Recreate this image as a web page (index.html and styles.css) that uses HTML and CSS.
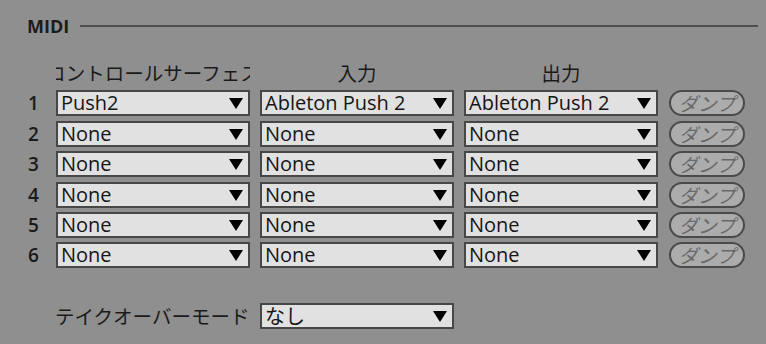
FILE: index.html
```html
<!DOCTYPE html>
<html lang="ja">
<head>
    <meta charset="UTF-8">
    <title>MIDI</title>
    <link rel="stylesheet" href="styles.css">
</head>
<body>
    <div class="section-title">
        <span>MIDI</span>
        <div class="rule"></div>
    </div>

    <div class="midi-grid">
        <div></div>
        <div class="col-head clip"><span>コントロールサーフェス</span></div>
        <div class="col-head">入力</div>
        <div class="col-head">出力</div>
        <div></div>

        <div class="num">1</div>
        <div class="dropdown">Push2</div>
        <div class="dropdown">Ableton Push 2</div>
        <div class="dropdown">Ableton Push 2</div>
        <div class="dump">ダンプ</div>

        <div class="num">2</div>
        <div class="dropdown">None</div>
        <div class="dropdown">None</div>
        <div class="dropdown">None</div>
        <div class="dump">ダンプ</div>

        <div class="num">3</div>
        <div class="dropdown">None</div>
        <div class="dropdown">None</div>
        <div class="dropdown">None</div>
        <div class="dump">ダンプ</div>

        <div class="num">4</div>
        <div class="dropdown">None</div>
        <div class="dropdown">None</div>
        <div class="dropdown">None</div>
        <div class="dump">ダンプ</div>

        <div class="num">5</div>
        <div class="dropdown">None</div>
        <div class="dropdown">None</div>
        <div class="dropdown">None</div>
        <div class="dump">ダンプ</div>

        <div class="num">6</div>
        <div class="dropdown">None</div>
        <div class="dropdown">None</div>
        <div class="dropdown">None</div>
        <div class="dump">ダンプ</div>
    </div>

    <div class="takeover">
        <div class="takeover-label">テイクオーバーモード</div>
        <div class="dropdown">なし</div>
    </div>
</body>
</html>
```

FILE: styles.css
```css
body {
    margin: 0;
    background-color: #8f8f8f;
    color: #151515;
    font-family: "Open Sans", "Noto Sans CJK JP", sans-serif;
    font-size: 20px;
}

.section-title {
    display: flex;
    align-items: center;
    padding: 15px 8px 0 27px;
    height: 22px;
}
.section-title span {
    font-weight: bold;
    font-size: 18px;
    color: #1c1c1c;
}
.rule {
    flex: 1;
    height: 2px;
    background-color: #4e4e4e;
    margin-left: 11px;
}

.midi-grid {
    display: grid;
    grid-template-columns: 46px 194px 194px 194px 77px;
    grid-auto-rows: 26px;
    column-gap: 10px;
    row-gap: 4.4px;
    margin-top: 23px;
}

.col-head {
    font-family: "Noto Sans CJK JP", sans-serif;
    font-size: 19.5px;
    text-align: center;
    line-height: 26px;
    color: #1a1a1a;
    margin-bottom: 5px;
}
.col-head.clip {
    overflow: hidden;
    display: flex;
    justify-content: center;
}
.col-head.clip span {
    white-space: nowrap;
    flex: none;
}

.num {
    padding-left: 28px;
    line-height: 26px;
    font-size: 19px;
    font-weight: 600;
    color: #1a1a1a;
}

.dropdown {
    position: relative;
    box-sizing: border-box;
    height: 26px;
    border: 2px solid #474747;
    background-color: #e1e1e1;
    padding-left: 3px;
    line-height: 22px;
    white-space: nowrap;
}
.dropdown::after {
    content: "";
    position: absolute;
    right: 5px;
    top: 6px;
    border-left: 7px solid transparent;
    border-right: 7px solid transparent;
    border-top: 11px solid #000;
}

.dump {
    box-sizing: border-box;
    height: 26px;
    border: 2px solid #4a4a4a;
    border-radius: 13px;
    background-color: #acacac;
    color: #686868;
    font-family: "Noto Sans CJK JP", sans-serif;
    font-size: 19px;
    font-style: italic;
    line-height: 21px;
    text-align: center;
    margin-left: 1px;
}

.takeover {
    display: flex;
    align-items: center;
    margin-top: 33px;
}
.takeover-label {
    width: 250px;
    padding-left: 55px;
    box-sizing: border-box;
    font-family: "Noto Sans CJK JP", sans-serif;
    font-size: 19.5px;
    white-space: nowrap;
    color: #1a1a1a;
}
.takeover .dropdown {
    width: 194px;
    margin-left: 10px;
    font-family: "Noto Sans CJK JP", sans-serif;
}
```
